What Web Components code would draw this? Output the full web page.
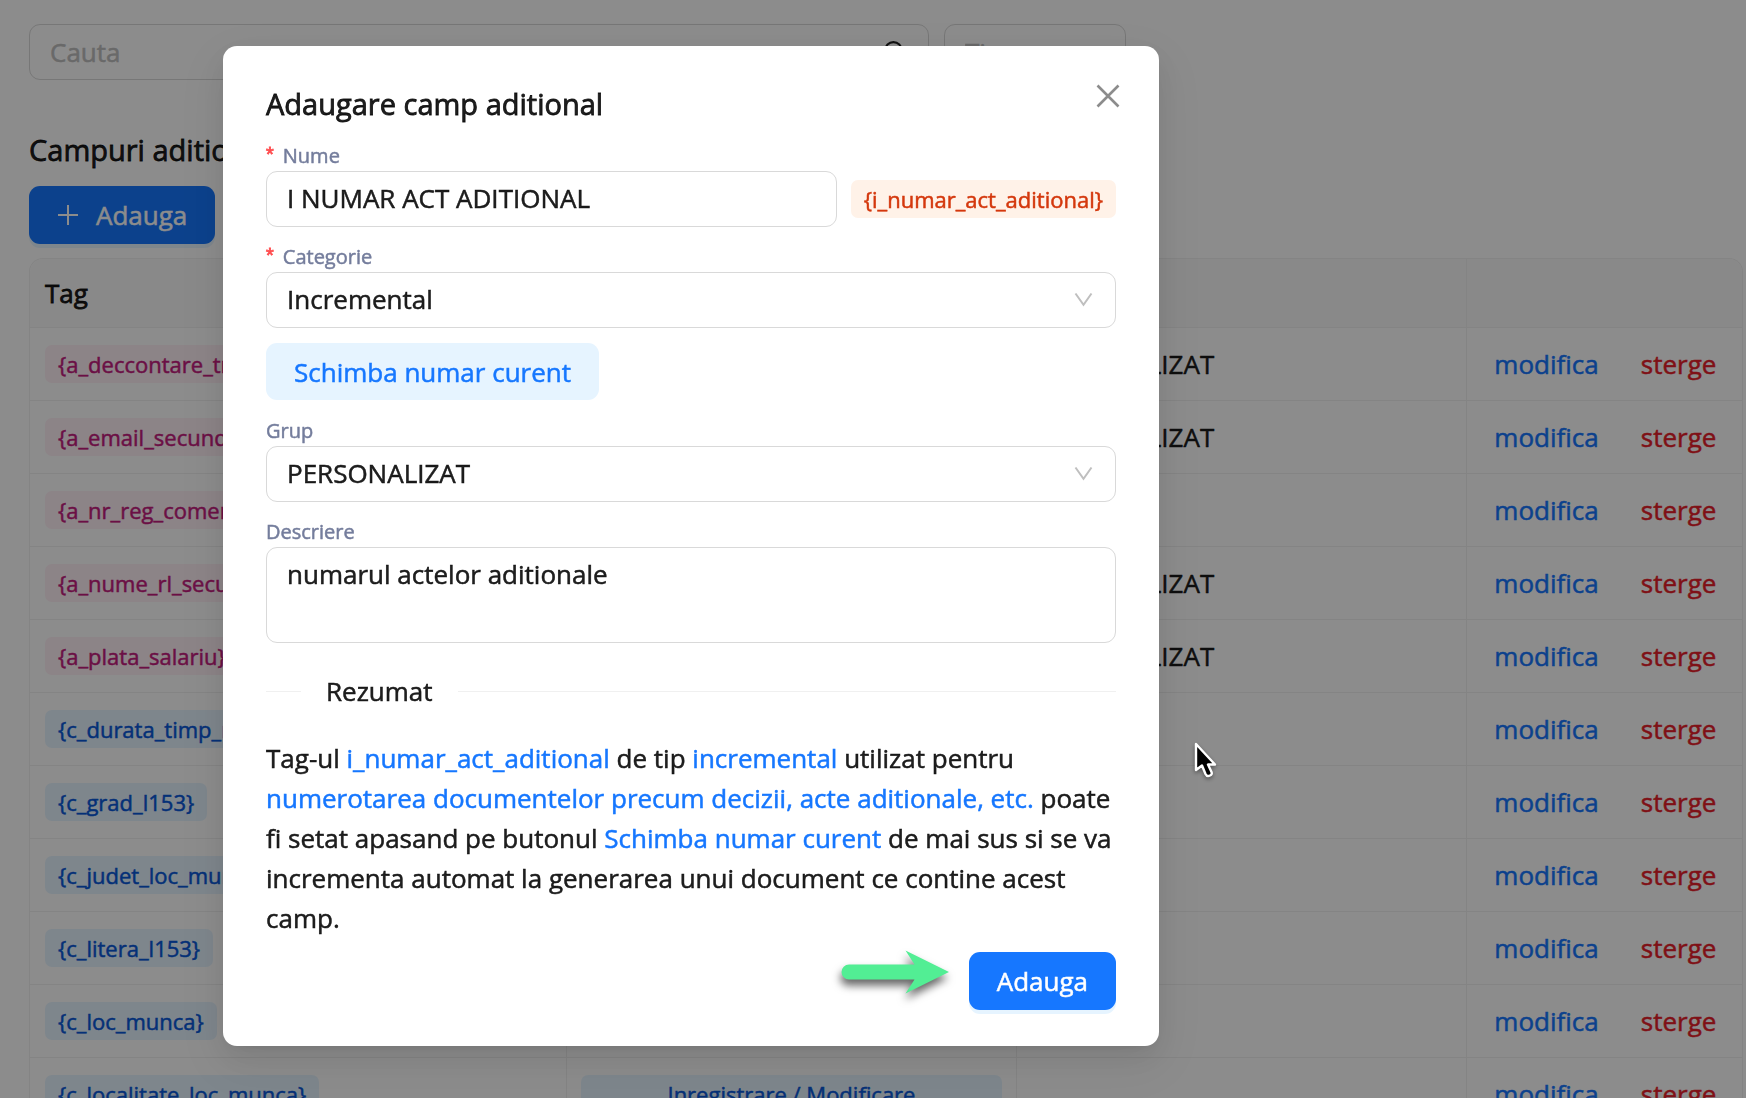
<!DOCTYPE html>
<html lang="ro">
<head>
<meta charset="utf-8">
<title>Campuri aditionale</title>
<style>
  html, body { margin: 0; height: 100%; }
  body {
    overflow: hidden;
    background: #fff;
    color: rgba(0, 0, 0, .88);
    font: 400 26px/40px "Open Sans", "Noto Sans", sans-serif;
    -webkit-text-stroke: .5px currentColor;
    --primary: #1677ff;
    --border: #d9d9d9;
    --split: #f0f0f0;
  }
</style>
</head>
<body>
<campuri-app></campuri-app>

<script>
const define = (name, html, setup) => {
  const template = document.createElement('template');
  template.innerHTML = html;
  customElements.define(name, class extends HTMLElement {
    constructor() {
      super();
      this.attachShadow({ mode: 'open' }).append(template.content.cloneNode(true));
    }
    connectedCallback() {
      if (setup && !this.ready) { this.ready = true; setup(this, this.shadowRoot); }
    }
  });
};

/* Coloured tag: color = pink | blue | volcano */
define('c-tag', `
<style>
  :host { display: block; box-sizing: border-box; width: max-content; padding: 0 13px; border-radius: 7px;
    font-size: 22px; line-height: 38px; white-space: nowrap; }
  :host([color=pink]) { background: #fff0f6; color: #c41d7f; }
  :host([color=blue]) { background: #e6f4ff; color: #0958d9; }
  :host([color=volcano]) { background: #fff2e8; color: #d4380d; }
  :host([block]) { width: auto; text-align: center; }
</style><slot></slot>`);

/* Button: kind = primary | soft */
define('c-button', `
<style>
  :host { display: inline-flex; }
  button { display: inline-flex; align-items: center; gap: 17px; height: 58px; padding: 0 28px; border: 0;
    border-radius: 11px; font: inherit; color: inherit; -webkit-text-stroke: inherit; white-space: nowrap; cursor: pointer; }
  :host([kind=primary]) button { background: var(--primary); color: #fff; box-shadow: 0 4px 0 rgba(5, 145, 255, .1); }
  :host([kind=soft]) button { height: 57px; background: #e6f4ff; color: var(--primary); }
</style><button type="button"><slot name="icon"></slot><slot></slot></button>`);

/* Labelled form control: kind = input | select | textarea */
define('c-field', `
<style>
  :host { display: block; }
  label { display: flex; gap: 9px; color: #747d9c; font-size: 20px; line-height: 30px; }
  .star { display: none; color: #ff4d4f; font-family: "Liberation Sans", sans-serif; line-height: 26px; -webkit-text-stroke-width: .8px; }
  :host([required]) .star { display: block; }
  .row { display: flex; align-items: center; gap: 14px; }
  .box { position: relative; display: flex; flex: 1; min-width: 0; }
  input, select, textarea { appearance: none; box-sizing: border-box; display: block; width: 100%; height: 56px; margin: 0;
    padding: 0 20px 2px; border: 1px solid var(--border); border-radius: 11px; background: #fff; outline: 0;
    font: inherit; color: inherit; -webkit-text-stroke: inherit; }
  textarea { height: 96px; padding: 6px 20px; resize: none; line-height: 40px; }
  svg { position: absolute; right: 23px; top: 20px; width: 19px; height: 15px; fill: none; stroke: #bfbfbf; stroke-width: 2; pointer-events: none; }
</style>
<label for="control"><span class="star">*</span><span class="text"></span></label>
<div class="row"><div class="box"></div><slot></slot></div>`,
(host, root) => {
  root.querySelector('.text').textContent = host.getAttribute('label');
  const kind = host.getAttribute('kind');
  const value = host.getAttribute('value');
  const control = document.createElement(kind);
  control.id = 'control';
  if (kind === 'select') control.add(new Option(value));
  else control.value = value;
  const box = root.querySelector('.box');
  box.append(control);
  if (kind === 'select')
    box.insertAdjacentHTML('beforeend', '<svg viewBox="0 0 19 15" aria-hidden="true"><path d="M1.5 1.5 9.5 12.8 17.5 1.5"/></svg>');
});

/* Search bar above the table */
define('c-toolbar', `
<style>
  :host { display: flex; gap: 15px; }
  .box { box-sizing: border-box; min-width: 0; display: flex; align-items: center; height: 56px; border: 1px solid var(--border); border-radius: 11px; padding: 0 20px; }
  .search { flex: 0 1 900px; }
  .type { flex: 0 1 182px; }
  input { flex: 1; width: 100%; min-width: 0; border: 0; padding: 0; outline: 0; background: none; font: inherit; color: inherit; -webkit-text-stroke: inherit; }
  input::placeholder { color: #bfbfbf; opacity: 1; }
  svg { width: 25px; height: 25px; fill: none; stroke: #1f1f1f; stroke-width: 2; }
</style>
<div class="box search"><input type="text" placeholder="Cauta" aria-label="Cauta">
  <svg viewBox="0 0 24 24" aria-hidden="true"><circle cx="10" cy="10" r="8"/><path d="M16 16 22 22"/></svg></div>
<div class="box type"><input type="text" placeholder="Tip" aria-label="Tip"></div>`);

const ROWS = [
  ['pink', '{a_deccontare_transport}', '', 'PERSONALIZAT'],
  ['pink', '{a_email_secundar}', '', 'PERSONALIZAT'],
  ['pink', '{a_nr_reg_comert}', '', ''],
  ['pink', '{a_nume_rl_secundar}', '', 'PERSONALIZAT'],
  ['pink', '{a_plata_salariu}', '', 'PERSONALIZAT'],
  ['blue', '{c_durata_timp_munca}', '', ''],
  ['blue', '{c_grad_l153}', '', ''],
  ['blue', '{c_judet_loc_munca}', '', ''],
  ['blue', '{c_litera_l153}', '', ''],
  ['blue', '{c_loc_munca}', '', ''],
  ['blue', '{c_localitate_loc_munca}', 'Inregistrare / Modificare', ''],
];

define('c-table', `
<style>
  :host { display: block; }
  table { width: 100%; table-layout: fixed; border-collapse: separate; border-spacing: 0;
    border: 1px solid var(--split); border-bottom: 0; border-radius: 14px 14px 0 0; overflow: hidden; }
  col.tag { width: 31.3%; } col.mid { width: 26.3%; }
  th, td { box-sizing: border-box; padding: 0 14px; border-bottom: 1px solid var(--split); text-align: left; font-weight: 400; white-space: nowrap; }
  th:first-child, td:first-child { padding-left: 15px; }
  th + th, td + td { border-left: 1px solid var(--split); }
  th { height: 69px; background: #fafafa; -webkit-text-stroke-width: .8px; }
  td { height: 73px; }
  .links { display: flex; gap: 42px; padding-left: 13px; }
  a { color: var(--primary); text-decoration: none; }
  a.del { color: #e81e2a; }
</style>
<table>
  <colgroup><col class="tag"><col class="mid"><col class="mid"><col></colgroup>
  <thead><tr><th>Tag</th><th></th><th></th><th></th></tr></thead>
  <tbody></tbody>
</table>`,
(host, root) => {
  root.querySelector('tbody').innerHTML = ROWS.map(([color, tag, category, group]) => `<tr>
    <td><c-tag color="${color}">${tag}</c-tag></td>
    <td>${category && `<c-tag block color="${color}">${category}</c-tag>`}</td>
    <td>${group}</td>
    <td><div class="links"><a href="#">modifica</a><a class="del" href="#">sterge</a></div></td></tr>`).join('');
});

define('c-divider', `
<style>
  :host { display: flex; align-items: center; gap: 25px; }
  :host::before, :host::after { content: ""; height: 1px; background: var(--split); }
  :host::before { flex: 0 0 35px; }
  :host::after { flex: 1; }
</style><slot></slot>`);

define('c-modal', `
<style>
  :host { position: fixed; inset: 0; box-sizing: border-box; padding: 46px 24px 24px 223px; background: rgba(0, 0, 0, .45); }
  section { position: relative; box-sizing: border-box; width: 100%; max-width: 936px; padding: 36px 43px; border-radius: 14px; background: #fff;
    box-shadow: 0 11px 29px 0 rgba(0, 0, 0, .08), 0 5px 11px -7px rgba(0, 0, 0, .12), 0 16px 50px 14px rgba(0, 0, 0, .05); }
  header { display: flex; justify-content: space-between; align-items: flex-start; height: 59px; }
  h2 { margin: 0; font-size: 29px; line-height: 44px; font-weight: 400; -webkit-text-stroke-width: .8px; }
  button { display: flex; padding: 2px; margin: 0 -6px 0 0; border: 0; background: none; cursor: pointer; }
  svg { width: 24px; height: 24px; fill: none; stroke: #8c8c8c; stroke-width: 2.6; }
</style>
<section role="dialog" aria-modal="true" aria-labelledby="title">
  <header><h2 id="title"></h2>
    <button type="button" aria-label="Inchide"><svg viewBox="0 0 24 24"><path d="M1.5 1.5 22.5 22.5M22.5 1.5 1.5 22.5"/></svg></button></header>
  <slot></slot>
</section>`,
(host, root) => { root.querySelector('h2').textContent = host.getAttribute('heading'); });

/* Form that adds a custom field */
define('c-add-form', `
<style>
  :host { display: block; }
  form { display: flex; flex-direction: column; align-items: stretch; }
  .category, .change, .description { margin-top: 15px; }
  .change { align-self: flex-start; }
  .group { margin-top: 16px; }
  c-divider { margin: 28px 0 27px; }
  p { margin: 0; }
  em { font-style: normal; color: var(--primary); }
  footer { display: flex; justify-content: flex-end; align-items: center; gap: 20px; margin-top: 14px; height: 58px; }
  .arrow { width: 108px; height: 44px; margin-bottom: 18px; overflow: visible; filter: drop-shadow(-1px 6px 4px rgba(0, 0, 0, .6)); }
</style>
<form>
  <c-field kind="input" label="Nume" value="I NUMAR ACT ADITIONAL" required><c-tag color="volcano">{i_numar_act_aditional}</c-tag></c-field>
  <c-field class="category" kind="select" label="Categorie" value="Incremental" required></c-field>
  <c-button class="change" kind="soft">Schimba numar curent</c-button>
  <c-field class="group" kind="select" label="Grup" value="PERSONALIZAT"></c-field>
  <c-field class="description" kind="textarea" label="Descriere" value="numarul actelor aditionale"></c-field>
  <c-divider>Rezumat</c-divider>
  <p>Tag-ul <em>i_numar_act_aditional</em> de tip <em>incremental</em> utilizat pentru <em>numerotarea documentelor precum decizii, acte aditionale, etc.</em> poate fi setat apasand pe butonul <em>Schimba numar curent</em> de mai sus si se va incrementa automat la generarea unui document ce contine acest camp.</p>
  <footer>
    <svg class="arrow" viewBox="0 0 108 44" aria-hidden="true"><path fill="#52ee94" d="M8 14.500H73.500L64.500.5 108 22 64.500 43.500 73.500 29.500H8A7.500 7.500 0 0 1 8 14.500Z"/></svg>
    <c-button kind="primary">Adauga</c-button>
  </footer>
</form>`);

define('campuri-app', `
<style>
  :host { display: block; box-sizing: border-box; height: 100vh; overflow: hidden; padding: 24px 3px 0 29px; }
  h1 { margin: 48px 0 14px; font-size: 29px; line-height: 44px; font-weight: 400; -webkit-text-stroke-width: .8px; }
  .add { display: flex; margin-bottom: 14px; }
  svg.plus { width: 22px; height: 22px; fill: none; stroke: currentColor; stroke-width: 2; }
  .pointer { position: fixed; left: 1193px; top: 741px; width: 26px; height: 40px; filter: drop-shadow(0 2px 2px rgba(0, 0, 0, .4)); }
</style>
<c-toolbar></c-toolbar>
<h1>Campuri aditionale</h1>
<c-button class="add" kind="primary"><svg slot="icon" class="plus" viewBox="0 0 22 22" aria-hidden="true"><path d="M11 1V21M1 11H21"/></svg>Adauga</c-button>
<c-table></c-table>
<c-modal heading="Adaugare camp aditional"><c-add-form></c-add-form></c-modal>
<svg class="pointer" viewBox="0 0 26 40" aria-hidden="true"><path fill="#000" stroke="#fff" stroke-width="2.4" stroke-linejoin="round" d="M3 3V29L9 24.500 12.500 33Q14 36 17 34.500 19.500 33.500 18.500 31L15 23.500H22Z"/></svg>`);
</script>
</body>
</html>
